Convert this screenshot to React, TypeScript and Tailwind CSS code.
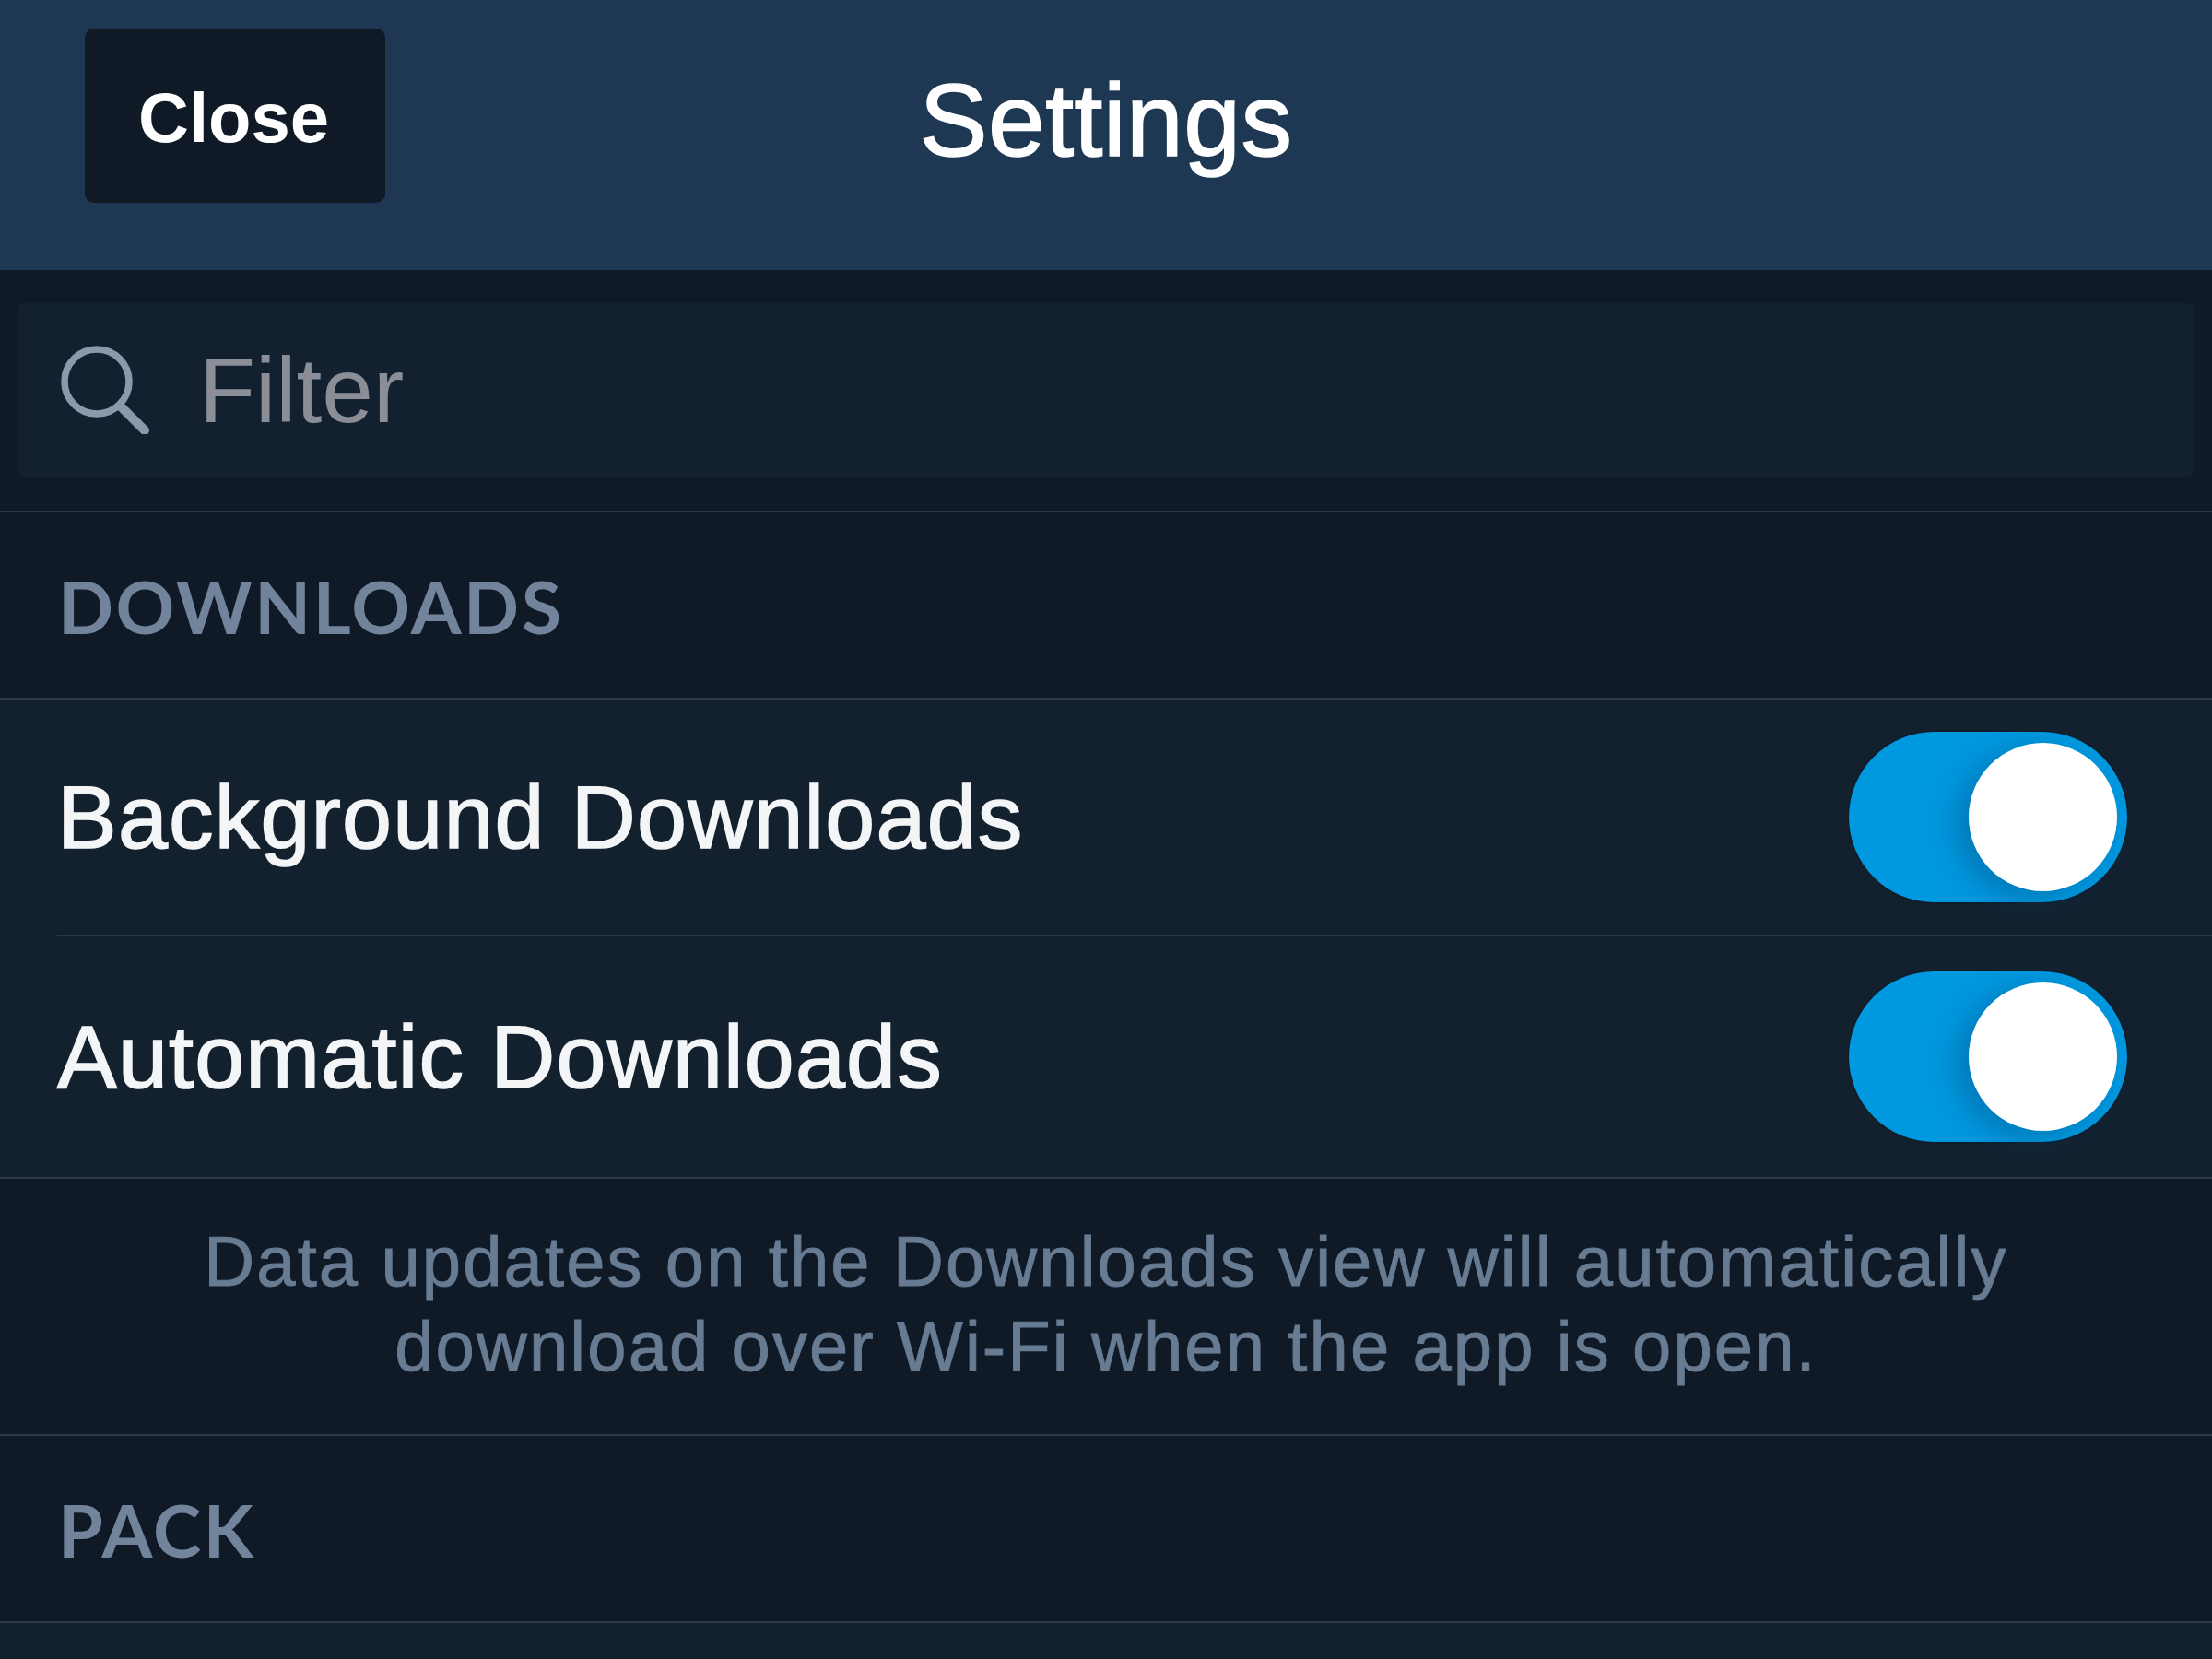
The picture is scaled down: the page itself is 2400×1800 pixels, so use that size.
import React from "react";

const sans = "font-['Liberation_Sans',Arial,sans-serif]";

function Toggle() {
  return (
    <div className="flex h-[185px] w-[302px] items-center justify-end rounded-full bg-[#0099e0] pr-[11px] shadow-[0_0_2px_#05090f]">
      <div className="h-[161px] w-[161px] rounded-full bg-white shadow-[-14px_8px_34px_rgba(0,70,120,0.4)]" />
    </div>
  );
}

function SectionHeader({ title, h }: { title: string; h: string }) {
  return (
    <div className={`flex items-center border-b-2 border-[#2a3847] pl-[63px] pt-[2px] ${h}`}>
      <span className="font-['Lato',sans-serif] text-[79px] font-bold leading-none tracking-[2.5px] text-[#71849b]">{title}</span>
    </div>
  );
}

function Row({ label, border }: { label: string; border: string }) {
  return (
    <div className={`flex h-full items-center justify-between pr-[92px] ${border}`}>
      <span className="text-[97px] leading-none tracking-[1.2px] text-[#f4f5f6] [-webkit-text-stroke:1.6px_#f4f5f6]">{label}</span>
      <Toggle />
    </div>
  );
}

export default function App() {
  return (
    <div className={`flex h-[1800px] w-[2400px] flex-col overflow-hidden bg-[#101a26] ${sans}`}>
      <header className="grid h-[293px] shrink-0 grid-cols-[1fr_auto_1fr] items-start bg-[#1e3752] pl-[92px] pt-[31px]">
        <button className="flex h-[189px] w-[326px] items-center justify-center rounded-[10px] bg-[#101a26] pr-[3px] pt-[5px] text-[76px] font-bold text-white">
          Close
        </button>
        <h1 className="mt-[35px] -translate-x-[46px] text-[111px] leading-[130px] tracking-[0.5px] text-white [-webkit-text-stroke:1.6px_white]">Settings</h1>
        <div />
      </header>

      <div className="flex h-[263px] shrink-0 flex-col justify-start border-b-2 border-[#2a3847] px-[20px] pt-[36px]">
        <div className="flex h-[188px] items-center gap-[54px] rounded-[6px] bg-[#12202f] pl-[46px]">
          <svg width="96" height="96" viewBox="0 0 96 96" fill="none" stroke="#8c99ab" className="shrink-0">
            <circle cx="39" cy="39" r="35" strokeWidth="7.5" />
            <path d="M65 66 L91 92" strokeWidth="10" strokeLinecap="round" />
          </svg>
          <span className="text-[100px] leading-none text-[#8b8e96]">Filter</span>
        </div>
      </div>

      <SectionHeader title="DOWNLOADS" h="h-[203px] shrink-0" />

      <div className="h-[520px] shrink-0 border-b-2 border-[#2a3847] bg-[#13212f] pl-[62px]">
        <div className="h-[257px]">
          <Row label="Background Downloads" border="border-b-2 border-[#2a3847]" />
        </div>
        <div className="h-[261px]">
          <Row label="Automatic Downloads" border="" />
        </div>
      </div>

      <div className="flex h-[279px] shrink-0 items-center justify-center border-b-2 border-[#2a3847] pb-[6px] text-center text-[76px] leading-[92px] tracking-[2.1px] text-[#677b92] [-webkit-text-stroke:0.9px_#677b92]">
        <p>
          Data updates on the Downloads view will automatically
          <br />
          download over Wi-Fi when the app is open.
        </p>
      </div>

      <SectionHeader title="PACK" h="h-[203px] shrink-0" />

      <div className="flex-1 bg-[#13212f]" />
    </div>
  );
}
